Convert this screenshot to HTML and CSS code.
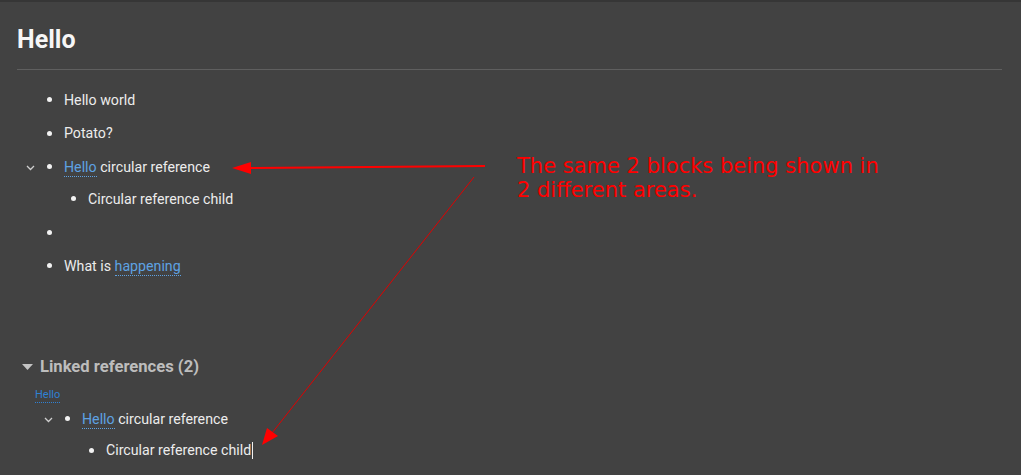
FILE: index.html
```html
<!DOCTYPE html>
<html>
<head>
<meta charset="utf-8">
<link rel="stylesheet" href="styles.css">
</head>
<body>
<div class="page">
  <h1 class="title">Hello</h1>
  <div class="divider"></div>
  <div class="blocks">
    <div class="row"><span class="toggle"></span><span class="dot"></span><span class="text">Hello world</span></div>
    <div class="row"><span class="toggle"></span><span class="dot"></span><span class="text">Potato?</span></div>
    <div class="row"><span class="toggle"><svg width="9" height="6" viewBox="0 0 9 6"><path d="M1 1 L4.5 4.5 L8 1" fill="none" stroke="#cfcfcf" stroke-width="1.3"/></svg></span><span class="dot"></span><span class="text"><a class="ref">Hello</a> circular reference</span></div>
    <div class="children">
      <div class="row child"><span class="toggle"></span><span class="dot"></span><span class="text">Circular reference child</span></div>
    </div>
    <div class="row"><span class="toggle"></span><span class="dot"></span><span class="text"></span></div>
    <div class="row"><span class="toggle"></span><span class="dot"></span><span class="text">What is <a class="ref">happening</a></span></div>
  </div>

  <div class="linked">
    <div class="linked-head"><svg class="caret" width="11" height="6" viewBox="0 0 11 6"><path d="M0 0 H11 L5.5 6 Z" fill="#c4c4c4"/></svg><span>Linked references (2)</span></div>
    <a class="page-ref">Hello</a>
    <div class="linked-blocks">
      <div class="row"><span class="toggle"><svg width="9" height="6" viewBox="0 0 9 6"><path d="M1 1 L4.5 4.5 L8 1" fill="none" stroke="#cfcfcf" stroke-width="1.3"/></svg></span><span class="dot"></span><span class="text"><a class="ref">Hello</a> circular reference</span></div>
      <div class="row child last"><span class="toggle"></span><span class="dot"></span><span class="text">Circular reference child<span class="cursor"></span></span></div>
    </div>
  </div>
</div>

<div class="note">The same 2 blocks being shown in<br>2 different areas.</div>
<svg class="arrows" width="1021" height="475" viewBox="0 0 1021 475">
  <line x1="485" y1="166" x2="246" y2="168" stroke="#ff0000" stroke-width="2"/>
  <polygon points="232,168 251,162 251,174" fill="#ff0000"/>
  <line x1="474" y1="177" x2="272" y2="433" stroke="#e00000" stroke-width="1"/>
  <polygon points="262,445 267,428 278,436" fill="#ff0000"/>
</svg>
</body>
</html>
```
FILE: styles.css
```css
html, body {
  margin: 0;
  padding: 0;
}
body {
  background: #424242;
  border-top: 2px solid #363636;
  width: 1021px;
  height: 473px;
  overflow: hidden;
  font-family: Roboto, "Liberation Sans", sans-serif;
  color: #ececec;
  position: relative;
}
.page {
  padding: 0 19px 0 17px;
}
.title {
  margin: 0;
  padding-top: 24px;
  height: 32px;
  font-size: 25px;
  line-height: 28px;
  font-weight: 700;
  color: #f6f6f6;
}
.divider {
  margin-top: 11px;
  height: 1px;
  background: #5f5f5f;
}
.blocks {
  padding-top: 13px;
}
.row {
  display: flex;
  align-items: center;
  height: 33.5px;
  font-size: 14.2px;
}
.row .toggle {
  width: 26px;
  display: flex;
  justify-content: center;
  box-sizing: border-box;
}
.toggle svg {
  display: block;
  margin-top: 2px;
}
.row .dot {
  width: 5px;
  height: 5px;
  border-radius: 50%;
  background: #f2f2f2;
  margin-left: 4px;
  margin-right: 12px;
}
.children {
  margin-bottom: 2px;
}
.row.child {
  padding-left: 24px;
  height: 30px;
}
.ref {
  color: #5ea2e2;
  border-bottom: 1px dotted #5ea2e2;
  padding-bottom: 1px;
}
.linked {
  padding-top: 72px;
}
.linked-head {
  display: flex;
  align-items: center;
  height: 24px;
  padding-left: 5px;
  font-size: 16.6px;
  font-weight: 700;
  color: #bdbdbd;
}
.caret {
  margin-right: 7px;
}
.page-ref {
  display: inline-block;
  margin-left: 18px;
  margin-top: 9px;
  font-size: 11px;
  line-height: 14px;
  color: #2f81d4;
  border-bottom: 1px dotted #2f81d4;
}
.linked-blocks {
  padding-left: 18px;
  margin-top: 1px;
}
.linked-blocks .row {
  height: 30px;
}
.linked-blocks .row.child {
  height: 34px;
}
.cursor {
  display: inline-block;
  width: 1px;
  height: 17px;
  background: #f0f0f0;
  vertical-align: -4px;
  margin-left: 1px;
}
.note {
  position: absolute;
  left: 517px;
  top: 152px;
  font-family: "DejaVu Sans", sans-serif;
  font-size: 21px;
  line-height: 24px;
  color: #ff0000;
}
.arrows {
  position: absolute;
  left: 0;
  top: -2px;
}
```
